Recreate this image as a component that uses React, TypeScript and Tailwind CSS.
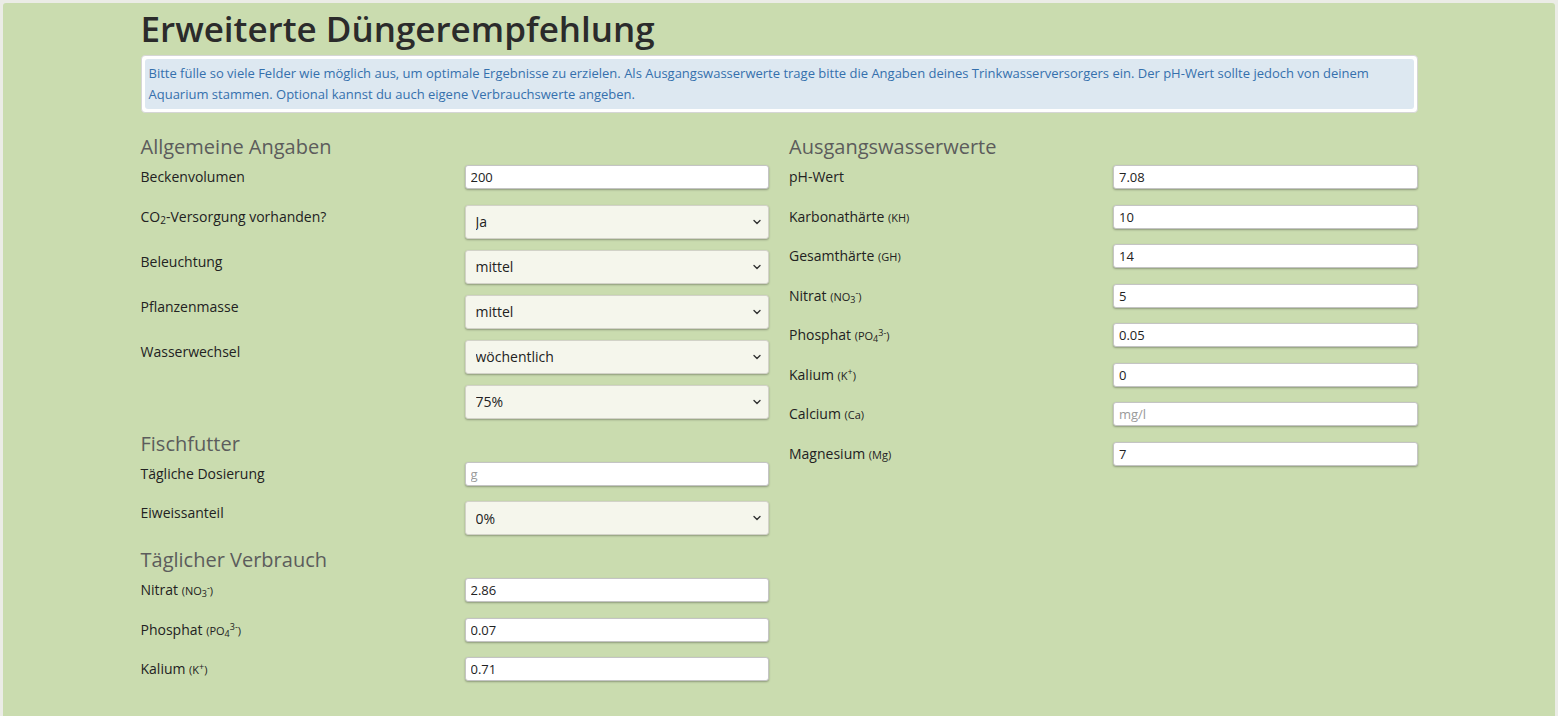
import type { ReactNode } from "react";

const FONT = { fontFamily: '"Open Sans", "Noto Sans", sans-serif' };

function Chevron() {
  return (
    <svg width="10" height="10" viewBox="0 0 10 10" className="pointer-events-none absolute right-[7px] top-1/2 -translate-y-1/2">
      <path d="M2 3.5 L5 6.5 L8 3.5" fill="none" stroke="#333" strokeWidth="1.4" strokeLinecap="round" strokeLinejoin="round" />
    </svg>
  );
}

function Heading({ children }: { children: ReactNode }) {
  return <h2 className="mb-[4px] h-[28px] text-[20px] font-normal leading-[28px] text-[#5c5c5c]">{children}</h2>;
}

function Small({ children }: { children: ReactNode }) {
  return <span className="text-[11px] leading-none">{children}</span>;
}

function Sub({ children }: { children: ReactNode }) {
  return <sub className="text-[9px] leading-none">{children}</sub>;
}

function Sup({ children }: { children: ReactNode }) {
  return <sup className="text-[9px] leading-none">{children}</sup>;
}

function InputRow({ label, value, placeholder }: { label: ReactNode; value?: string; placeholder?: string }) {
  return (
    <div className="mb-[15.5px] grid grid-cols-[324px_1fr] items-start">
      <div className="h-[24px] whitespace-nowrap text-[14px] leading-[24px] text-[#222]">{label}</div>
      <input
        type="text"
        defaultValue={value}
        placeholder={placeholder}
        className="h-[24px] w-full rounded-[3px] border border-[#c4c4c4] bg-white px-[5px] text-[13px] text-[#222] shadow-[0_1px_2px_rgba(0,0,0,0.3)] outline-none placeholder:text-[#9a9a9a]"
      />
    </div>
  );
}

function SelectRow({ label, value }: { label?: ReactNode; value: string }) {
  return (
    <div className="mb-[11px] grid grid-cols-[324px_1fr] items-start">
      <div className="h-[24px] whitespace-nowrap text-[14px] leading-[24px] text-[#222]">{label}</div>
      <div className="relative">
        <select
          defaultValue={value}
          className="h-[34px] w-full appearance-none rounded-[3px] border border-[#d2d2c8] bg-[#f5f6ec] pl-[10px] text-[14px] text-[#222] shadow-[0_1px_2px_rgba(0,0,0,0.3)] outline-none"
        >
          <option>{value}</option>
        </select>
        <Chevron />
      </div>
    </div>
  );
}

export default function App() {
  return (
    <div className="min-h-[716px] bg-[#ebece6] pl-[3px] pr-[3px] pt-[3px]" style={FONT}>
      <div className="min-h-[713px] rounded-tl-[3px] rounded-tr-[3px] bg-[#cadcaf] pt-[7px] pb-[20px]">
        <div className="mx-auto w-[1277px]">
          <h1 className="mb-[7px] text-[35px] font-semibold leading-[38px] text-[#2b2b2b]">
            Erweiterte Düngerempfehlung
          </h1>

          <div className="mb-[20px] rounded-[4px] border border-[#d6d6d6] bg-white p-[3px]">
            <div className="rounded-[3px] bg-[#dde8f1] px-[4px] py-[4px] text-[13px] leading-[21px] text-[#3570ad]">
              Bitte fülle so viele Felder wie möglich aus, um optimale Ergebnisse zu erzielen. Als Ausgangswasserwerte trage bitte die Angaben deines Trinkwasserversorgers ein. Der pH-Wert sollte jedoch von deinem
              <br />
              Aquarium stammen. Optional kannst du auch eigene Verbrauchswerte angeben.
            </div>
          </div>

          <div className="grid grid-cols-2 gap-[20px]">
            <div>
              <Heading>Allgemeine Angaben</Heading>
              <InputRow label="Beckenvolumen" value="200" />
              <SelectRow label={<>CO<sub className="text-[10px] leading-none">2</sub>-Versorgung vorhanden?</>} value="Ja" />
              <SelectRow label="Beleuchtung" value="mittel" />
              <SelectRow label="Pflanzenmasse" value="mittel" />
              <SelectRow label="Wasserwechsel" value="wöchentlich" />
              <SelectRow value="75%" />

              <Heading>Fischfutter</Heading>
              <InputRow label="Tägliche Dosierung" placeholder="g" />
              <SelectRow label="Eiweissanteil" value="0%" />

              <Heading>Täglicher Verbrauch</Heading>
              <InputRow label={<>Nitrat <Small>(NO<Sub>3</Sub><Sup>-</Sup>)</Small></>} value="2.86" />
              <InputRow label={<>Phosphat <Small>(PO<Sub>4</Sub><Sup>3-</Sup>)</Small></>} value="0.07" />
              <InputRow label={<>Kalium <Small>(K<Sup>+</Sup>)</Small></>} value="0.71" />
            </div>

            <div>
              <Heading>Ausgangswasserwerte</Heading>
              <InputRow label="pH-Wert" value="7.08" />
              <InputRow label={<>Karbonathärte <Small>(KH)</Small></>} value="10" />
              <InputRow label={<>Gesamthärte <Small>(GH)</Small></>} value="14" />
              <InputRow label={<>Nitrat <Small>(NO<Sub>3</Sub><Sup>-</Sup>)</Small></>} value="5" />
              <InputRow label={<>Phosphat <Small>(PO<Sub>4</Sub><Sup>3-</Sup>)</Small></>} value="0.05" />
              <InputRow label={<>Kalium <Small>(K<Sup>+</Sup>)</Small></>} value="0" />
              <InputRow label={<>Calcium <Small>(Ca)</Small></>} placeholder="mg/l" />
              <InputRow label={<>Magnesium <Small>(Mg)</Small></>} value="7" />
            </div>
          </div>
        </div>
      </div>
    </div>
  );
}
